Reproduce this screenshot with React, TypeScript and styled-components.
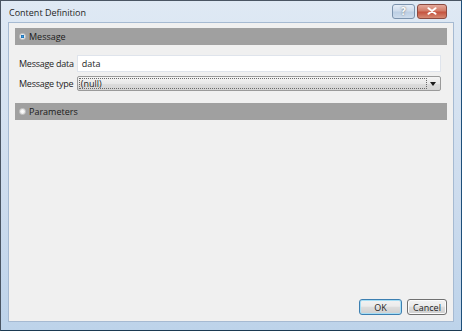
import React from "react";
import styled, { createGlobalStyle } from "styled-components";

const GlobalStyle = createGlobalStyle`
  html, body {
    margin: 0;
    padding: 0;
    background: #ffffff;
  }
  * {
    box-sizing: border-box;
  }
`;

const Window = styled.div`
  width: 462px;
  height: 331px;
  display: flex;
  flex-direction: column;
  border: 1px solid #4a5563;
  border-right-color: #1d4f7a;
  border-bottom-color: #1b3a52;
  background: linear-gradient(180deg, #dfe9f4 0%, #cddcee 60%, #bdd3ea 100%);
  padding: 0 7px 8px 7px;
  font-family: "Open Sans", "Noto Sans", sans-serif;
  font-size: 9px;
  color: #1e1e1e;
`;

const TitleBar = styled.div`
  height: 21px;
  display: flex;
  align-items: center;
  justify-content: space-between;
  padding-left: 1px;
`;

const Title = styled.span`
  color: #1e1e1e;
  padding-top: 2px;
`;

const Caption = styled.div`
  display: flex;
  align-items: flex-start;
  gap: 2px;
  margin-right: 7px;
  margin-top: -1px;
`;

const CaptionButton = styled.div<{ $close?: boolean }>`
  height: 15px;
  width: ${(p) => (p.$close ? "30px" : "23px")};
  border: 1px solid ${(p) => (p.$close ? "#8b4a40" : "#7c93ad")};
  border-radius: 3px;
  display: flex;
  align-items: center;
  justify-content: center;
  background: ${(p) =>
    p.$close
      ? "linear-gradient(180deg, #e4a99b 0%, #d27d69 45%, #c5533f 55%, #d58a73 100%)"
      : "linear-gradient(180deg, #e6eef8 0%, #cfdcec 45%, #bccfe4 55%, #cedcec 100%)"};
  color: #ffffff;
  font-size: 10px;
  font-weight: bold;
  text-shadow: 0 0 2px #555;
`;

const Client = styled.div`
  flex: 1;
  background: #f0f0f0;
  border: 1px solid #a6bad2;
  display: flex;
  flex-direction: column;
  padding: 5px 6px 6px 6px;
`;

const SectionBar = styled.div`
  height: 17px;
  background: #a0a0a0;
  display: flex;
  align-items: center;
  gap: 3px;
  padding-left: 4px;
  color: #1a1a1a;
`;

const Radio = styled.span<{ $checked?: boolean }>`
  width: 7px;
  height: 7px;
  border-radius: 50%;
  background: ${(p) =>
    p.$checked
      ? "radial-gradient(circle, #3aa3e6 0%, #1f6fb3 40%, #e8eef4 55%, #d3d9de 100%)"
      : "radial-gradient(circle, #ffffff 0%, #f2f2f2 50%, #d4d4d4 100%)"};
  border: 1px solid #cacaca;
`;

const Form = styled.div`
  display: grid;
  grid-template-columns: auto 1fr;
  column-gap: 3px;
  row-gap: 4px;
  align-items: center;
  padding: 10px 6px 12px 4px;
`;

const Label = styled.span`
  white-space: nowrap;
  letter-spacing: -0.25px;
`;

const TextField = styled.div`
  height: 17px;
  background: #ffffff;
  border: 1px solid #dfe4ec;
  padding-left: 4px;
  display: flex;
  align-items: center;
`;

const Combo = styled.div`
  height: 15px;
  border: 1px solid #9a9a9a;
  border-radius: 2px;
  background: linear-gradient(180deg, #f4f4f4 0%, #e8e8e8 50%, #dcdcdc 51%, #d4d4d4 100%);
  display: flex;
  align-items: stretch;
  padding: 1px;
`;

const ComboText = styled.div`
  flex: 1;
  border: 1px dotted #6a6a6a;
  display: flex;
  align-items: center;
  padding-left: 1px;
  line-height: 1;
`;

const ComboArrow = styled.div`
  width: 12px;
  display: flex;
  align-items: center;
  justify-content: center;
`;

const Spacer = styled.div`
  flex: 1;
`;

const Footer = styled.div`
  display: flex;
  justify-content: flex-end;
  gap: 5px;
`;

const Button = styled.div<{ $default?: boolean }>`
  width: ${(p) => (p.$default ? "43px" : "40px")};
  height: 16px;
  border: 1px solid ${(p) => (p.$default ? "#3c7fb1" : "#707070")};
  border-radius: 3px;
  background: linear-gradient(180deg, #f2f2f2 0%, #ebebeb 45%, #dddddd 50%, #cfcfcf 100%);
  box-shadow: inset 0 0 0 1px ${(p) => (p.$default ? "#a6def5" : "#fbfbfb")};
  display: flex;
  align-items: center;
  justify-content: center;
`;

export default function App() {
  return (
    <>
      <GlobalStyle />
      <Window>
        <TitleBar>
          <Title>Content Definition</Title>
          <Caption>
            <CaptionButton>?</CaptionButton>
            <CaptionButton $close>
              <svg width="10" height="8" viewBox="0 0 10 8">
                <path d="M1.5 1.2 L8.5 6.8 M8.5 1.2 L1.5 6.8" stroke="#ffffff" strokeWidth="2" strokeLinecap="round" />
              </svg>
            </CaptionButton>
          </Caption>
        </TitleBar>
        <Client>
          <SectionBar>
            <Radio $checked />
            <span>Message</span>
          </SectionBar>
          <Form>
            <Label>Message data</Label>
            <TextField>data</TextField>
            <Label>Message type</Label>
            <Combo>
              <ComboText>(null)</ComboText>
              <ComboArrow>
                <svg width="6" height="4" viewBox="0 0 6 4">
                  <path d="M0 0 H6 L3 4 Z" fill="#1a1a1a" />
                </svg>
              </ComboArrow>
            </Combo>
          </Form>
          <SectionBar>
            <Radio />
            <span>Parameters</span>
          </SectionBar>
          <Spacer />
          <Footer>
            <Button $default>OK</Button>
            <Button>Cancel</Button>
          </Footer>
        </Client>
      </Window>
    </>
  );
}
